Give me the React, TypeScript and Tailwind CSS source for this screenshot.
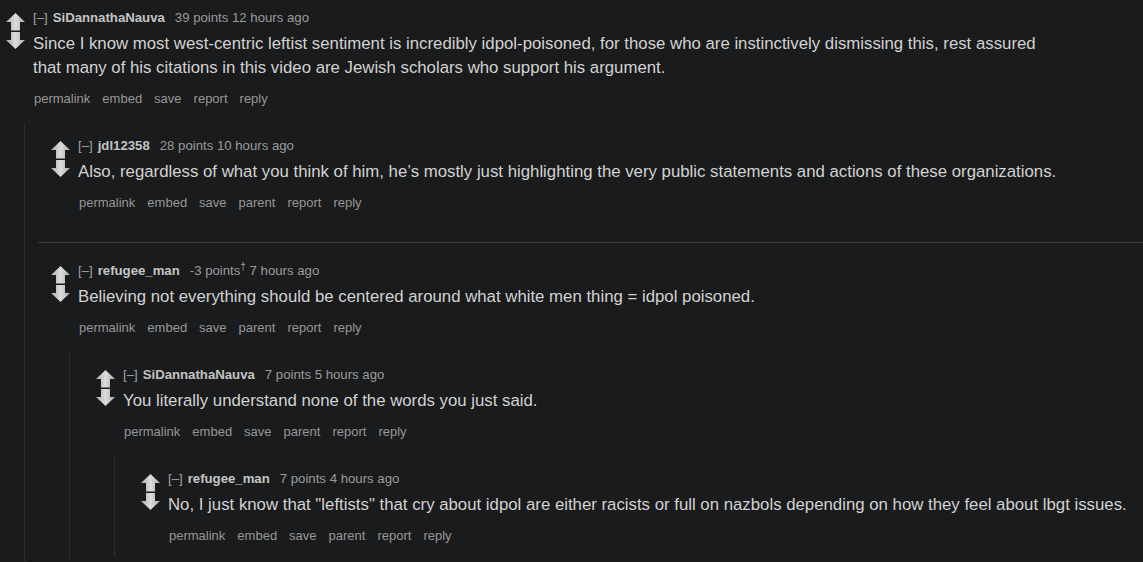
import React from "react";

interface CommentData {
  id: string;
  author: string;
  score: string;
  dagger?: boolean;
  time: string;
  body: string[];
  parent?: boolean;
  replies?: CommentData[];
}

const thread: CommentData = {
  id: "c1",
  author: "SiDannathaNauva",
  score: "39 points",
  time: "12 hours ago",
  body: [
    "Since I know most west-centric leftist sentiment is incredibly idpol-poisoned, for those who are instinctively dismissing this, rest assured that many of his citations in this video are Jewish scholars who support his argument.",
  ],
  replies: [
    {
      id: "c2",
      author: "jdl12358",
      score: "28 points",
      time: "10 hours ago",
      parent: true,
      body: [
        "Also, regardless of what you think of him, he\u2019s mostly just highlighting the very public statements and actions of these organizations.",
      ],
    },
    {
      id: "c3",
      author: "refugee_man",
      score: "-3 points",
      dagger: true,
      time: "7 hours ago",
      parent: true,
      body: ["Believing not everything should be centered around what white men thing = idpol poisoned."],
      replies: [
        {
          id: "c4",
          author: "SiDannathaNauva",
          score: "7 points",
          time: "5 hours ago",
          parent: true,
          body: ["You literally understand none of the words you just said."],
          replies: [
            {
              id: "c5",
              author: "refugee_man",
              score: "7 points",
              time: "4 hours ago",
              parent: true,
              body: [
                "No, I just know that \"leftists\" that cry about idpol are either racists or full on nazbols depending on how they feel about lbgt issues.",
              ],
            },
          ],
        },
      ],
    },
  ],
};

function Arrows() {
  return (
    <svg width="19" height="36" viewBox="0 0 19 36" className="block">
      <defs>
        <linearGradient id="arrowFill" x1="0" y1="0" x2="1" y2="0">
          <stop offset="0" stopColor="#acacac" />
          <stop offset="0.5" stopColor="#dcdcdc" />
          <stop offset="1" stopColor="#acacac" />
        </linearGradient>
      </defs>
      <polygon
        points="9.5,0 19,9 14,9 14,17.5 5,17.5 5,9 0,9"
        fill="url(#arrowFill)"
      />
      <polygon
        points="5,19 14,19 14,27 19,27 9.5,36 0,27 5,27"
        fill="url(#arrowFill)"
      />
    </svg>
  );
}

function Comment({
  data,
  nested,
  separated,
}: {
  data: CommentData;
  nested?: boolean;
  separated?: boolean;
}) {
  const actions = ["permalink", "embed", "save"];
  if (data.parent) actions.push("parent");
  actions.push("report", "reply");

  return (
    <div
      className={
        nested
          ? separated
            ? "ml-[13px] mt-[30px] border-t border-[#3a3b3d] pl-[13px] pt-[19px]"
            : "ml-[13px] pl-[13px] pt-[13px]"
          : "pl-[6px] pt-[9px]"
      }
    >
      <div className="flex">
        <div className="w-[19px] shrink-0 pt-[4px]">
          <Arrows />
        </div>
        <div className="ml-[8px] min-w-0">
          <div className="text-[13.2px] leading-[18px] text-[#9c9c9c]">
            <span className="text-[#a3a3a3]">[–]</span>
            <span className="ml-[5px] font-bold text-[#c4c4c4]">{data.author}</span>
            <span className="ml-[10px]">
              {data.score}
              {data.dagger && <sup className="text-[10px] leading-none">†</sup>}
              {" "}
              {data.time}
            </span>
          </div>
          <div className="mt-[5px] max-w-[1020px] text-[16.8px] leading-6 text-[#d2d2d2]">
            {data.body.map((p, i) => (
              <p key={i}>{p}</p>
            ))}
          </div>
          <ul className="mt-[10px] flex gap-[12px] pl-[1px] text-[13px] leading-[18px] text-[#979797]">
            {actions.map((a) => (
              <li key={a}>{a}</li>
            ))}
          </ul>
        </div>
      </div>
      {data.replies && data.replies.length > 0 && (
        <div className="ml-[18px] mt-4 border-l border-dotted border-[#3d3e40] pb-[12px]">
          {data.replies.map((r, i) => (
            <Comment key={r.id} data={r} nested separated={i > 0} />
          ))}
        </div>
      )}
    </div>
  );
}

export default function App() {
  return (
    <div
      className="h-[562px] w-full overflow-hidden bg-[#1a1b1c]"
      style={{ fontFamily: '"Liberation Sans", Arial, sans-serif' }}
    >
      <Comment data={thread} />
    </div>
  );
}
